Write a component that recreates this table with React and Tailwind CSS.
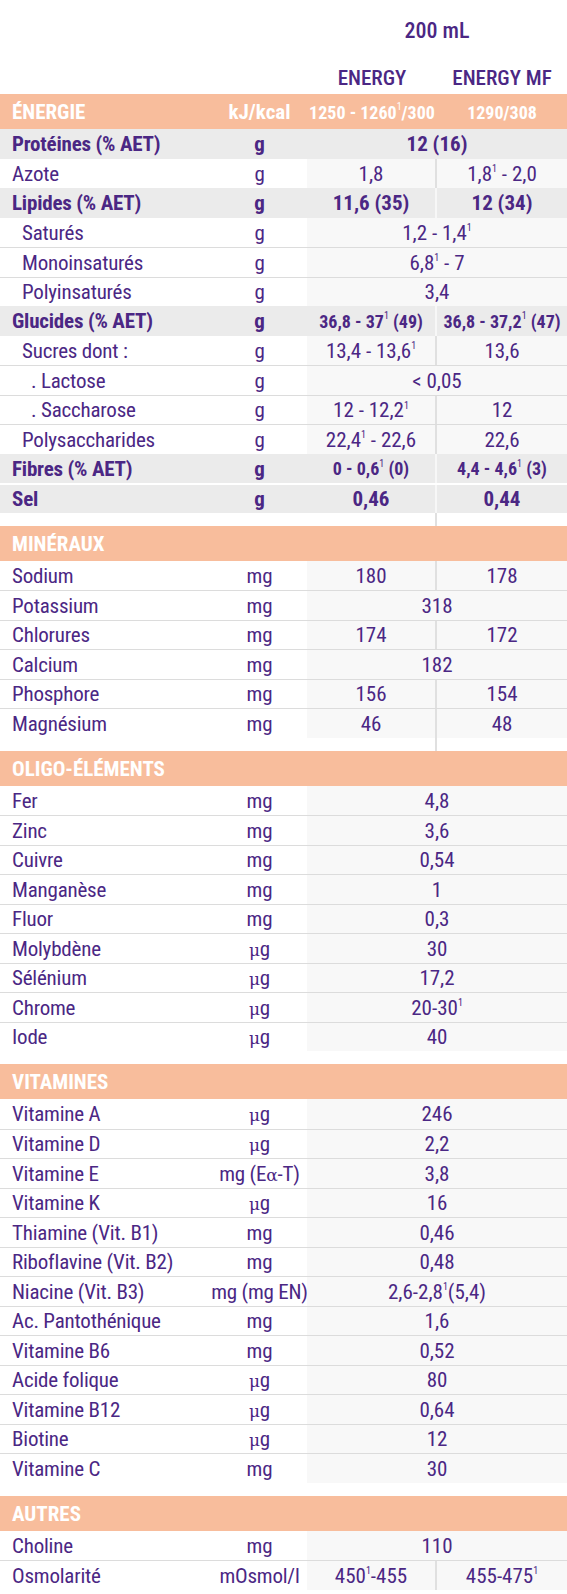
import React from "react";

const SEC1 = [
  { l: "Protéines (% AET)", u: "g", v: "12 (16)", b: true },
  { l: "Azote", u: "g", v: "1,8", v2: "1,8¹ - 2,0" },
  { l: "Lipides (% AET)", u: "g", v: "11,6 (35)", v2: "12 (34)", b: true },
  { l: "Saturés", i: 1, u: "g", v: "1,2 - 1,4¹" },
  { l: "Monoinsaturés", i: 1, u: "g", v: "6,8¹ - 7" },
  { l: "Polyinsaturés", i: 1, u: "g", v: "3,4" },
  { l: "Glucides (% AET)", u: "g", v: "36,8 - 37¹ (49)", v2: "36,8 - 37,2¹ (47)", b: true, s: true },
  { l: "Sucres dont :", i: 1, u: "g", v: "13,4 - 13,6¹", v2: "13,6" },
  { l: ". Lactose", i: 2, u: "g", v: "< 0,05" },
  { l: ". Saccharose", i: 2, u: "g", v: "12 - 12,2¹", v2: "12" },
  { l: "Polysaccharides", i: 1, u: "g", v: "22,4¹ - 22,6", v2: "22,6" },
  { l: "Fibres (% AET)", u: "g", v: "0 - 0,6¹ (0)", v2: "4,4 - 4,6¹ (3)", b: true, s: true },
  { l: "Sel", u: "g", v: "0,46", v2: "0,44", b: true },
];

const MIN = [
  { l: "Sodium", u: "mg", v: "180", v2: "178" },
  { l: "Potassium", u: "mg", v: "318" },
  { l: "Chlorures", u: "mg", v: "174", v2: "172" },
  { l: "Calcium", u: "mg", v: "182" },
  { l: "Phosphore", u: "mg", v: "156", v2: "154" },
  { l: "Magnésium", u: "mg", v: "46", v2: "48" },
];

const OLIGO = [
  { l: "Fer", u: "mg", v: "4,8" },
  { l: "Zinc", u: "mg", v: "3,6" },
  { l: "Cuivre", u: "mg", v: "0,54" },
  { l: "Manganèse", u: "mg", v: "1" },
  { l: "Fluor", u: "mg", v: "0,3" },
  { l: "Molybdène", u: "ug", v: "30" },
  { l: "Sélénium", u: "ug", v: "17,2" },
  { l: "Chrome", u: "ug", v: "20-30¹" },
  { l: "Iode", u: "ug", v: "40" },
];

const VIT = [
  { l: "Vitamine A", u: "ug", v: "246" },
  { l: "Vitamine D", u: "ug", v: "2,2" },
  { l: "Vitamine E", u: "ea", v: "3,8" },
  { l: "Vitamine K", u: "ug", v: "16" },
  { l: "Thiamine (Vit. B1)", u: "mg", v: "0,46" },
  { l: "Riboflavine (Vit. B2)", u: "mg", v: "0,48" },
  { l: "Niacine (Vit. B3)", u: "mg (mg EN)", v: "2,6-2,8¹(5,4)" },
  { l: "Ac. Pantothénique", u: "mg", v: "1,6" },
  { l: "Vitamine B6", u: "mg", v: "0,52" },
  { l: "Acide folique", u: "ug", v: "80" },
  { l: "Vitamine B12", u: "ug", v: "0,64" },
  { l: "Biotine", u: "ug", v: "12" },
  { l: "Vitamine C", u: "mg", v: "30" },
];

const AUTRES = [
  { l: "Choline", u: "mg", v: "110" },
  { l: "Osmolarité", u: "mOsmol/l", v: "450¹-455", v2: "455-475¹" },
];

function Val({ t }) {
  const parts = t.split("¹");
  return (
    <span className="whitespace-nowrap">
      {parts.map((p, k) => (
        <React.Fragment key={k}>
          {p}
          {k < parts.length - 1 && (
            <sup className="text-[10px] font-normal top-[-0.85em]">1</sup>
          )}
        </React.Fragment>
      ))}
    </span>
  );
}

function Unit({ u }) {
  if (u === "ug")
    return (
      <span>
        <span className="font-['DejaVu_Serif',serif] font-stretch-normal text-[17px]">μ</span>g
      </span>
    );
  if (u === "ea")
    return (
      <span>
        mg (E<span className="font-['DejaVu_Serif',serif] font-stretch-normal text-[17px]">α</span>-T)
      </span>
    );
  return <span>{u}</span>;
}

function Row({ r, prev }) {
  let border = "border-t-0";
  if (prev) {
    if (!prev.b && !r.b) border = "border-t border-[#dcdcdc]";
    else if (prev.b && r.b) border = "border-t-2 border-white";
  }
  const rowBg = r.b ? "bg-[#ebebeb]" : "bg-white";
  const dataBg = r.b ? "bg-[#ebebeb]" : "bg-[#f8f8f8]";
  const weight = r.b ? "font-bold" : "font-normal";
  const valSize = r.s ? "text-[18px]" : "text-[21px]";
  const pad = r.i === 2 ? "pl-[31px]" : r.i === 1 ? "pl-[22px]" : "pl-[12px]";
  const sepColor = r.b ? "border-[#f7f7f7]" : "border-[#e0e0e0]";
  return (
    <div className={`grid grid-cols-[212px_95px_130px_130px] h-[29.5px] ${border} ${rowBg} ${weight}`}>
      <div className={`flex items-center pt-[2px] ${pad} text-[21px] tracking-[-0.2px] whitespace-nowrap`}>{r.l}</div>
      <div className="flex items-center justify-center pt-[2px] text-[21px] tracking-[-0.2px] whitespace-nowrap">
        <Unit u={r.u} />
      </div>
      {r.v2 === undefined ? (
        <div className={`col-span-2 flex items-center justify-center pt-[2px] ${valSize} ${dataBg}`}>
          <Val t={r.v} />
        </div>
      ) : (
        <>
          <div className={`flex items-center justify-center pt-[2px] border-r-2 ${sepColor} ${valSize} ${dataBg}`}>
            <Val t={r.v} />
          </div>
          <div className={`flex items-center justify-center pt-[2px] ${valSize} ${dataBg}`}>
            <Val t={r.v2} />
          </div>
        </>
      )}
    </div>
  );
}

function Rows({ rows }) {
  return (
    <div>
      {rows.map((r, k) => (
        <Row key={r.l} r={r} prev={k > 0 ? rows[k - 1] : null} />
      ))}
    </div>
  );
}

function Gap({ sep }) {
  return (
    <div className="grid grid-cols-[212px_95px_130px_130px] h-[13px]">
      <div />
      <div />
      <div className={sep ? "border-r-2 border-[#e0e0e0]" : ""} />
      <div />
    </div>
  );
}

function Header({ title }) {
  return (
    <div className="h-[35px] bg-[#f8bd9c] flex items-center pt-[2px] pl-[12px] text-white font-bold text-[21px] uppercase">
      {title}
    </div>
  );
}

export default function App() {
  return (
    <div className="w-[567px] h-[1594px] bg-white text-[#4b2784] font-['Roboto',sans-serif] font-stretch-condensed leading-none">
      <div className="h-[94px] grid grid-cols-[212px_95px_130px_130px]">
        <div />
        <div />
        <div className="col-span-2 grid grid-rows-[60px_34px]">
          <div className="flex items-center justify-center text-[22px] font-medium pt-[2px]">200 mL</div>
          <div className="grid grid-cols-2 text-[21px] font-medium">
            <div className="flex items-center justify-center pt-[3px]">ENERGY</div>
            <div className="flex items-center justify-center pt-[3px]">ENERGY MF</div>
          </div>
        </div>
      </div>
      <div className="h-[35px] bg-[#f8bd9c] grid grid-cols-[212px_95px_130px_130px] text-white font-bold pt-[2px]">
        <div className="flex items-center pl-[12px] text-[21px]">ÉNERGIE</div>
        <div className="flex items-center justify-center text-[21px]">kJ/kcal</div>
        <div className="flex items-center justify-center text-[18px]">
          <Val t="1250 - 1260¹/300" />
        </div>
        <div className="flex items-center justify-center text-[18px]">1290/308</div>
      </div>
      <Rows rows={SEC1} />
      <Gap sep />
      <Header title="Minéraux" />
      <Rows rows={MIN} />
      <Gap sep />
      <Header title="Oligo-éléments" />
      <Rows rows={OLIGO} />
      <Gap />
      <Header title="Vitamines" />
      <Rows rows={VIT} />
      <Gap />
      <Header title="Autres" />
      <Rows rows={AUTRES} />
    </div>
  );
}
